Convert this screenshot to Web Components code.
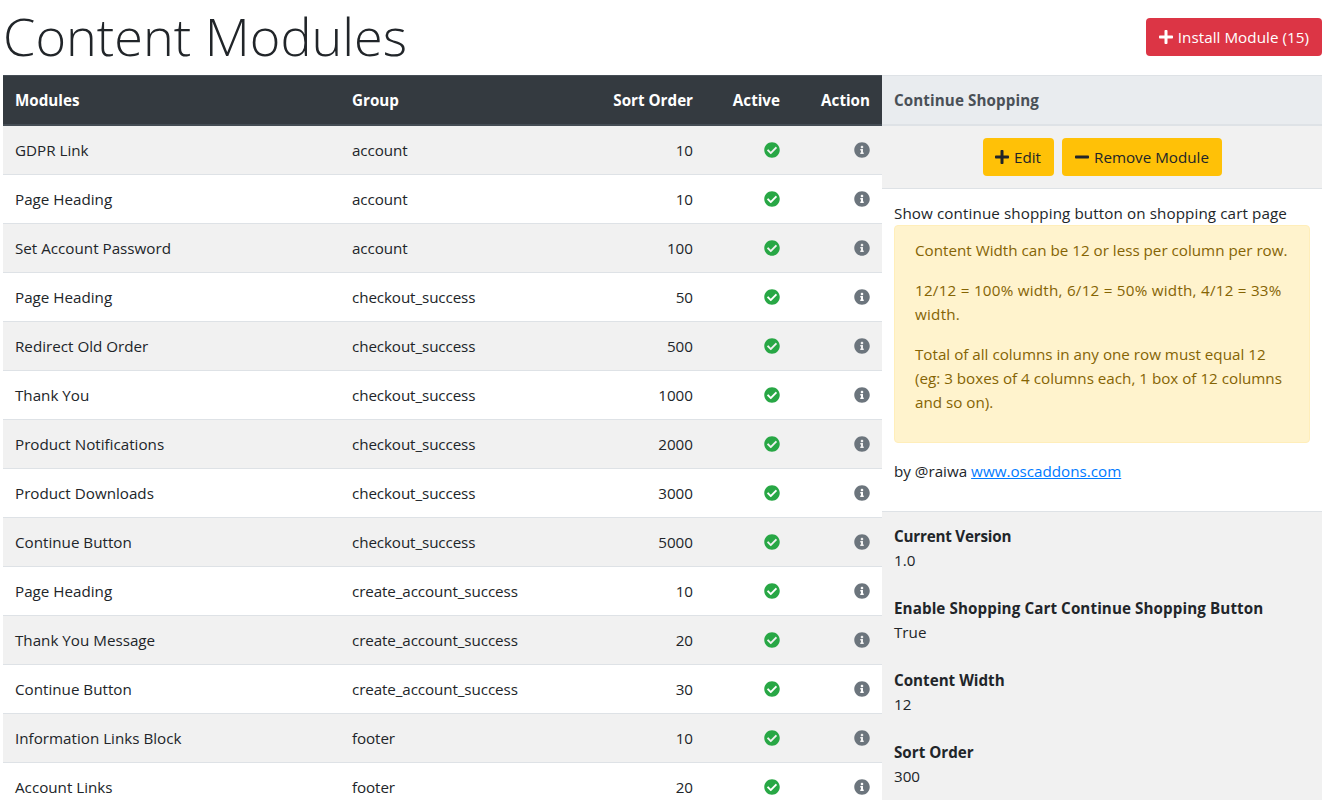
<!DOCTYPE html>
<html>
<head>
<meta charset="utf-8">
<title>Content Modules</title>
<style>
  html, body { margin: 0; padding: 0; background: #fff; }
  body { font-family: "Open Sans", "Noto Sans", sans-serif; color: #212529; height: 800px; overflow: hidden; }
</style>
</head>
<body>
<modules-page></modules-page>

<script>
const ROWS = [
  ['GDPR Link', 'account', 10],
  ['Page Heading', 'account', 10],
  ['Set Account Password', 'account', 100],
  ['Page Heading', 'checkout_success', 50],
  ['Redirect Old Order', 'checkout_success', 500],
  ['Thank You', 'checkout_success', 1000],
  ['Product Notifications', 'checkout_success', 2000],
  ['Product Downloads', 'checkout_success', 3000],
  ['Continue Button', 'checkout_success', 5000],
  ['Page Heading', 'create_account_success', 10],
  ['Thank You Message', 'create_account_success', 20],
  ['Continue Button', 'create_account_success', 30],
  ['Information Links Block', 'footer', 10],
  ['Account Links', 'footer', 20]
];

const PLUS = '<svg viewBox="0 0 448 512" width="14" height="16"><path fill="currentColor" d="M416 208H272V64c0-17.67-14.33-32-32-32h-32c-17.67 0-32 14.33-32 32v144H32c-17.67 0-32 14.33-32 32v32c0 17.67 14.33 32 32 32h144v144c0 17.67 14.33 32 32 32h32c17.67 0 32-14.33 32-32V304h144c17.67 0 32-14.33 32-32v-32c0-17.67-14.33-32-32-32z"/></svg>';
const MINUS = '<svg viewBox="0 0 448 512" width="14" height="16"><path fill="currentColor" d="M416 208H32c-17.67 0-32 14.33-32 32v32c0 17.67 14.33 32 32 32h384c17.67 0 32-14.33 32-32v-32c0-17.67-14.33-32-32-32z"/></svg>';
const CHECK = '<svg viewBox="0 0 512 512" width="16" height="16"><path fill="#28a745" d="M504 256c0 136.967-111.033 248-248 248S8 392.967 8 256 119.033 8 256 8s248 111.033 248 248zM227.314 387.314l184-184c6.248-6.248 6.248-16.379 0-22.627l-22.627-22.627c-6.248-6.249-16.379-6.249-22.628 0L216 308.118l-70.059-70.059c-6.248-6.248-16.379-6.248-22.628 0l-22.627 22.627c-6.248 6.248-6.248 16.379 0 22.627l104 104c6.249 6.249 16.379 6.249 22.628.001z"/></svg>';
const INFO = '<svg viewBox="0 0 512 512" width="16" height="16"><path fill="#6c757d" d="M256 8C119.043 8 8 119.083 8 256c0 136.997 111.043 248 248 248s248-111.003 248-248C504 119.083 392.957 8 256 8zm0 110c23.196 0 42 18.804 42 42s-18.804 42-42 42-42-18.804-42-42 18.804-42 42-42zm56 254c0 6.627-5.373 12-12 12h-88c-6.627 0-12-5.373-12-12v-24c0-6.627 5.373-12 12-12h12v-64h-12c-6.627 0-12-5.373-12-12v-24c0-6.627 5.373-12 12-12h64c6.627 0 12 5.373 12 12v100h12c6.627 0 12 5.373 12 12v24z"/></svg>';

class ActionButton extends HTMLElement {
  constructor() {
    super();
    this.attachShadow({ mode: 'open' });
    const icon = this.getAttribute('icon') === 'minus' ? MINUS : PLUS;
    this.shadowRoot.innerHTML = `
      <style>
        :host { display: inline-flex; align-items: center; height: 38px; box-sizing: border-box; padding: 0 13px; border-radius: 4px; font-size: var(--btn-size, 15.2px); }
        :host([variant="danger"]) { background: #dc3545; color: #fff; letter-spacing: .05px; }
        :host([variant="warning"]) { background: #ffc107; color: #212529; }
        svg { display: block; margin-right: 5px; }
      </style>
      ${icon}<slot></slot>
    `;
  }
}
customElements.define('action-button', ActionButton);

class ModulesTable extends HTMLElement {
  constructor() {
    super();
    this.attachShadow({ mode: 'open' });
    const rows = ROWS.map(r => `
      <div class="row">
        <span>${r[0]}</span><span class="group">${r[1]}</span><span class="num">${r[2]}</span>
        <span class="icon">${CHECK}</span><span class="icon">${INFO}</span>
      </div>`).join('');
    this.shadowRoot.innerHTML = `
      <style>
        :host { display: block; width: 879px; flex: none; font-size: var(--cell-size, 15.2px); }
        .row, .head { display: grid; grid-template-columns: 337px 204px 137px 87px 1fr; align-items: center; padding: 0 12px; }
        .head { height: 51px; box-sizing: border-box; background: #343a40; border-top: 1px solid #454d55; border-bottom: 2px solid #454d55; color: #fff; font-weight: 700; }
        .row { height: 49px; box-sizing: border-box; border-bottom: 1px solid #dee2e6; background: #fff; }
        .row:nth-child(odd) { background: #f1f1f1; }
        .group { letter-spacing: -.1px; }
        .num, .head .end { text-align: right; }
        .icon { display: flex; justify-content: flex-end; }
        svg { display: block; }
      </style>
      <div class="head">
        <span>Modules</span><span>Group</span><span class="end">Sort Order</span><span class="end">Active</span><span class="end">Action</span>
      </div>
      ${rows}
    `;
  }
}
customElements.define('modules-table', ModulesTable);

class ModuleDetail extends HTMLElement {
  constructor() {
    super();
    this.attachShadow({ mode: 'open' });
    this.shadowRoot.innerHTML = `
      <style>
        :host { display: flex; flex-direction: column; width: 440px; flex: none; font-size: var(--cell-size, 15.2px); line-height: 24px; }
        .title { flex: none; height: 51px; box-sizing: border-box; background: #e9ecef; border-top: 1px solid #dee2e6; border-bottom: 2px solid #dee2e6; color: #495057; font-weight: 700; padding: 0 12px; display: flex; align-items: center; letter-spacing: .1px; }
        .buttons { flex: none; height: 63px; box-sizing: border-box; background: #f1f1f1; border-bottom: 1px solid #dee2e6; display: flex; justify-content: center; align-items: center; gap: 8px; padding-left: 1px; }
        .edit { padding-left: 12px; }
        .desc { flex: none; padding: 12px 12px 0; height: 322px; box-sizing: border-box; }
        .lead { letter-spacing: .1px; }
        .wide { letter-spacing: .25px; }
        .alert { background: #fff3cd; border: 1px solid #ffeeba; border-radius: 4px; color: #856404; padding: 12px 20px; box-sizing: border-box; height: 218px; margin-bottom: 16px; }
        .alert p { margin: 0 0 16px; }
        a { color: #007bff; text-decoration: underline; }
        .fields { background: #f1f1f1; border-top: 1px solid #dee2e6; padding: 12px 12px 0; flex: 1; }
        .fields div { margin-bottom: 24px; }
        b { display: block; font-weight: 700; }
        .tight { letter-spacing: -.2px; }
        .loose { letter-spacing: .09px; }
      </style>
      <div class="title">Continue Shopping</div>
      <div class="buttons">
        <action-button class="edit" variant="warning" icon="plus">Edit</action-button>
        <action-button variant="warning" icon="minus">Remove Module</action-button>
      </div>
      <div class="desc">
        <span class="lead">Show continue shopping button on shopping cart page</span>
        <div class="alert">
          <p>Content Width can be 12 or less per column per row.</p>
          <p class="wide">12/12 = 100% width, 6/12 = 50% width, 4/12 = 33% width.</p>
          <p>Total of all columns in any one row must equal 12 (eg: 3 boxes of 4 columns each, 1 box of 12 columns and so on).</p>
        </div>
        by @raiwa <a href="#">www.oscaddons.com</a>
      </div>
      <div class="fields">
        <div><b class="tight">Current Version</b>1.0</div>
        <div><b class="loose">Enable Shopping Cart Continue Shopping Button</b>True</div>
        <div><b>Content Width</b>12</div>
        <div><b>Sort Order</b>300</div>
      </div>
    `;
  }
}
customElements.define('module-detail', ModuleDetail);

class ModulesPage extends HTMLElement {
  constructor() {
    super();
    this.attachShadow({ mode: 'open' });
    this.shadowRoot.innerHTML = `
      <style>
        :host { display: block; padding: 0 9px 0 3px; height: 800px; overflow: hidden; box-sizing: border-box; --cell-size: 15.2px; --btn-size: 15.2px; }
        header { display: flex; justify-content: space-between; align-items: flex-start; height: 75px; }
        h1 { margin: 0; font-size: 52.2px; font-weight: 300; line-height: 71px; }
        action-button { margin-top: 18px; }
        .main { display: flex; height: 725px; }
      </style>
      <header>
        <h1>Content Modules</h1>
        <action-button variant="danger" icon="plus">Install Module (15)</action-button>
      </header>
      <div class="main">
        <modules-table></modules-table>
        <module-detail></module-detail>
      </div>
    `;
  }
}
customElements.define('modules-page', ModulesPage);
</script>
</body>
</html>
